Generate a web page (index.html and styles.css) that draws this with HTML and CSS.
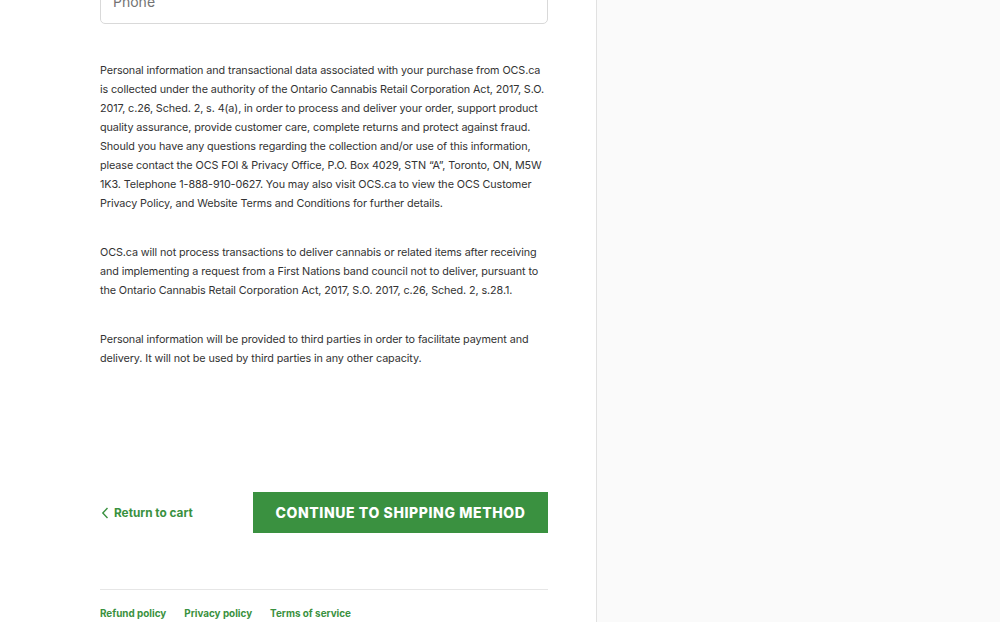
FILE: index.html
```html
<!DOCTYPE html>
<html lang="en">
<head>
<meta charset="utf-8">
<title>Checkout - Information</title>
<link rel="stylesheet" href="styles.css">
</head>
<body>
<div class="page">
  <main class="main">
    <div class="content">
      <div class="field">
        <input class="field-input" type="tel" placeholder="Phone">
      </div>

      <div class="notice">
        <p>Personal information and transactional data associated with your purchase from OCS.ca<br>is collected under the authority of the Ontario Cannabis Retail Corporation Act, 2017, S.O.<br>2017, c.26, Sched. 2, s. 4(a), in order to process and deliver your order, support product<br>quality assurance, provide customer care, complete returns and protect against fraud.<br>Should you have any questions regarding the collection and/or use of this information,<br>please contact the OCS FOI &amp; Privacy Office, P.O. Box 4029, STN “A”, Toronto, ON, M5W<br>1K3. Telephone 1-888-910-0627. You may also visit OCS.ca to view the OCS Customer<br>Privacy Policy, and Website Terms and Conditions for further details.</p>
        <p>OCS.ca will not process transactions to deliver cannabis or related items after receiving<br>and implementing a request from a First Nations band council not to deliver, pursuant to<br>the Ontario Cannabis Retail Corporation Act, 2017, S.O. 2017, c.26, Sched. 2, s.28.1.</p>
        <p>Personal information will be provided to third parties in order to facilitate payment and<br>delivery. It will not be used by third parties in any other capacity.</p>
      </div>

      <div class="step-footer">
        <a class="back-link" href="#">
          <svg class="chev" width="8" height="12" viewBox="0 0 8 12" aria-hidden="true"><path d="M6.5 1 1.8 6l4.7 5" fill="none" stroke="currentColor" stroke-width="1.4"/></svg>
          <span>Return to cart</span>
        </a>
        <button class="btn" type="button">CONTINUE TO SHIPPING METHOD</button>
      </div>

      <footer class="footer">
        <a href="#">Refund policy</a>
        <a href="#">Privacy policy</a>
        <a href="#">Terms of service</a>
      </footer>
    </div>
  </main>
  <aside class="sidebar"></aside>
</div>
</body>
</html>
```

FILE: styles.css
```css
* { box-sizing: border-box; }
html, body { margin: 0; padding: 0; }
body {
  font-family: "Inter", "Liberation Sans", sans-serif;
  color: #333;
  background: #fff;
  overflow: hidden;
}
.page {
  display: flex;
  height: 622px;
}
.main {
  width: 597px;
  border-right: 1px solid #e1e1e1;
  padding-left: 100px;
}
.sidebar {
  flex: 1;
  background: #fafafa;
}
.content {
  width: 448px;
  margin-top: -22px;
}
.field-input {
  display: block;
  width: 100%;
  height: 46px;
  border: 1px solid #d9d9d9;
  border-radius: 5px;
  padding: 0 12px;
  font-family: inherit;
  font-size: 14px;
  color: #333;
  background: #fff;
}
.field-input::placeholder { color: #737373; }
.notice {
  margin-top: 37px;
  font-size: 10.8px;
  letter-spacing: -0.1px;
  line-height: 19px;
  color: #333;
  white-space: nowrap;
}
.notice p { margin: 0 0 30px; }
.notice p:last-child { margin-bottom: 0; }
.step-footer {
  margin-top: 124px;
  display: flex;
  align-items: center;
  justify-content: space-between;
}
.back-link {
  display: flex;
  align-items: center;
  gap: 5px;
  color: #3a9140;
  font-weight: 700;
  font-size: 11.8px;
  text-decoration: none;
  padding-left: 1px;
}
.btn {
  width: 295px;
  height: 41px;
  border: 0;
  background: #3a9140;
  color: #fff;
  font-family: inherit;
  font-weight: 800;
  font-size: 14px;
  letter-spacing: 0.6px;
}
.footer {
  margin-top: 56px;
  border-top: 1px solid #e6e6e6;
  padding-top: 17px;
  display: flex;
  gap: 18px;
}
.footer a {
  color: #3a9140;
  font-weight: 700;
  font-size: 9.9px;
  text-decoration: none;
}
```
